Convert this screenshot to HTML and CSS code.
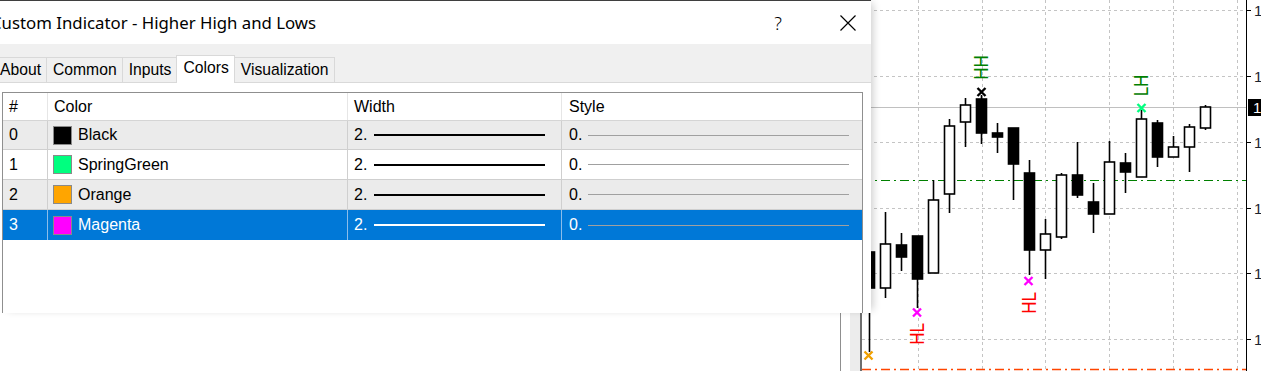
FILE: index.html
```html
<!DOCTYPE html>
<html lang="en">
<head>
    <meta charset="UTF-8">
    <title>Custom Indicator - Higher High and Lows</title>
    <link rel="stylesheet" href="styles.css">
</head>
<body>
    <div class="desk">
        <div class="chart">
            <svg width="399" height="371" viewBox="862 0 399 371">
                <!-- grid -->
                <g class="grid">
                    <line x1="862" y1="10.5" x2="1246" y2="10.5"/>
                    <line x1="862" y1="76.5" x2="1246" y2="76.5"/>
                    <line x1="862" y1="142.5" x2="1246" y2="142.5"/>
                    <line x1="862" y1="208.5" x2="1246" y2="208.5"/>
                    <line x1="862" y1="273.5" x2="1246" y2="273.5"/>
                    <line x1="862" y1="339.5" x2="1246" y2="339.5"/>
                    <line x1="918.5" y1="0" x2="918.5" y2="371"/>
                    <line x1="982.5" y1="0" x2="982.5" y2="371"/>
                    <line x1="1045.5" y1="0" x2="1045.5" y2="371"/>
                    <line x1="1109.5" y1="0" x2="1109.5" y2="371"/>
                    <line x1="1173.5" y1="0" x2="1173.5" y2="371"/>
                    <line x1="1237.5" y1="0" x2="1237.5" y2="371"/>
                </g>
                <line class="price-line" x1="862" y1="107.5" x2="1246" y2="107.5"/>
                <line class="level-green" x1="862" y1="180.5" x2="1246" y2="180.5"/>
                <line class="level-red" x1="862" y1="369.5" x2="1246" y2="369.5"/>

                <!-- candles -->
                <g class="candles">
                    <line x1="869.5" y1="240" x2="869.5" y2="352"/><rect class="bear" x="864.5" y="252" width="10" height="36"/>
                    <line x1="885.5" y1="212" x2="885.5" y2="298"/><rect class="bull" x="880.5" y="244" width="10" height="44"/>
                    <line x1="901.5" y1="233" x2="901.5" y2="271"/><rect class="bear" x="896.5" y="245" width="10" height="12"/>
                    <line x1="917.5" y1="236" x2="917.5" y2="308"/><rect class="bear" x="912.5" y="236" width="10" height="43"/>
                    <line x1="933.5" y1="180" x2="933.5" y2="273"/><rect class="bull" x="928.5" y="200" width="10" height="73"/>
                    <line x1="949.5" y1="119" x2="949.5" y2="213"/><rect class="bull" x="944.5" y="126" width="10" height="68"/>
                    <line x1="965.5" y1="98" x2="965.5" y2="147"/><rect class="bull" x="960.5" y="105" width="10" height="17"/>
                    <line x1="981.5" y1="95" x2="981.5" y2="144"/><rect class="bear" x="976.5" y="99" width="10" height="34"/>
                    <line x1="997.5" y1="123" x2="997.5" y2="153"/><rect class="bear" x="992.5" y="133" width="10" height="4"/>
                    <line x1="1013.5" y1="128" x2="1013.5" y2="200"/><rect class="bear" x="1008.5" y="128" width="10" height="36"/>
                    <line x1="1029.5" y1="160" x2="1029.5" y2="275"/><rect class="bear" x="1024.5" y="173" width="10" height="77"/>
                    <line x1="1045.5" y1="219" x2="1045.5" y2="279"/><rect class="bull" x="1040.5" y="234" width="10" height="16"/>
                    <line x1="1061.5" y1="173" x2="1061.5" y2="239"/><rect class="bull" x="1056.5" y="175" width="10" height="62"/>
                    <line x1="1077.5" y1="142" x2="1077.5" y2="198"/><rect class="bear" x="1072.5" y="175" width="10" height="20"/>
                    <line x1="1093.5" y1="183" x2="1093.5" y2="233"/><rect class="bear" x="1088.5" y="202" width="10" height="12"/>
                    <line x1="1109.5" y1="141" x2="1109.5" y2="214"/><rect class="bull" x="1104.5" y="162" width="10" height="52"/>
                    <line x1="1125.5" y1="153" x2="1125.5" y2="193"/><rect class="bear" x="1120.5" y="163" width="10" height="9"/>
                    <line x1="1141.5" y1="110" x2="1141.5" y2="177"/><rect class="bull" x="1136.5" y="119" width="10" height="58"/>
                    <line x1="1157.5" y1="120" x2="1157.5" y2="167"/><rect class="bear" x="1152.5" y="123" width="10" height="34"/>
                    <line x1="1173.5" y1="136" x2="1173.5" y2="157"/><rect class="bull" x="1168.5" y="147" width="10" height="10"/>
                    <line x1="1189.5" y1="124" x2="1189.5" y2="172"/><rect class="bull" x="1184.5" y="127" width="10" height="20"/>
                    <line x1="1205.5" y1="105" x2="1205.5" y2="130"/><rect class="bull" x="1200.5" y="107" width="10" height="21"/>
                </g>

                <!-- swing markers -->
                <path class="mark mark-black" d="M977.5 88 L985.5 96 M985.5 88 L977.5 96"/>
                <path class="mark mark-green" d="M1137.5 104 L1145.5 112 M1145.5 104 L1137.5 112"/>
                <path class="mark mark-magenta" d="M913 308.5 L921 316.5 M921 308.5 L913 316.5"/>
                <path class="mark mark-magenta" d="M1024.5 277 L1032.5 285 M1032.5 277 L1024.5 285"/>
                <path class="mark mark-orange" d="M864.5 351.5 L872.5 359.5 M872.5 351.5 L864.5 359.5"/>

                <text class="swing swing-high" transform="translate(988,67.5) rotate(-90) scale(1,1.15)">HH</text>
                <text class="swing swing-high" transform="translate(1148,85.5) rotate(-90) scale(1,1.15)">LH</text>
                <text class="swing swing-low" transform="translate(924,334) rotate(-90) scale(1,1.15)">HL</text>
                <text class="swing swing-low" transform="translate(1036,303) rotate(-90) scale(1,1.15)">HL</text>

                <!-- price axis -->
                <line class="axis" x1="1246.5" y1="0" x2="1246.5" y2="371"/>
                <g class="ticks">
                    <line x1="1246" y1="10.5" x2="1251" y2="10.5"/>
                    <line x1="1246" y1="76.5" x2="1251" y2="76.5"/>
                    <line x1="1246" y1="142.5" x2="1251" y2="142.5"/>
                    <line x1="1246" y1="208.5" x2="1251" y2="208.5"/>
                    <line x1="1246" y1="273.5" x2="1251" y2="273.5"/>
                    <line x1="1246" y1="339.5" x2="1251" y2="339.5"/>
                </g>
                <g class="axis-label">
                    <text x="1254" y="16">1</text>
                    <text x="1254" y="82">1</text>
                    <text x="1254" y="148">1</text>
                    <text x="1254" y="214">1</text>
                    <text x="1254" y="279">1</text>
                    <text x="1254" y="345">1</text>
                </g>
                <rect class="price-box" x="1248" y="99" width="13" height="17"/>
                <text class="price-text" x="1253" y="113">1</text>
            </svg>
        </div>

        <div class="back">
            <div class="back-main"></div>
            <div class="back-gap"></div>
            <div class="back-edge"></div>
        </div>

        <div class="dialog">
            <div class="titlebar">
                <span class="title">Custom Indicator - Higher High and Lows</span>
                <span class="help">?</span>
                <svg class="close" width="16" height="16" viewBox="0 0 16 16">
                    <path d="M0.5 0.5 L15.5 15.5 M15.5 0.5 L0.5 15.5"/>
                </svg>
            </div>

            <div class="tabs">
                <div class="tab">About</div>
                <div class="tab">Common</div>
                <div class="tab">Inputs</div>
                <div class="tab active">Colors</div>
                <div class="tab">Visualization</div>
            </div>

            <div class="content">
                <div class="buffers">
                    <div class="row head">
                        <div class="cell">#</div>
                        <div class="cell">Color</div>
                        <div class="cell">Width</div>
                        <div class="cell cell-style">Style</div>
                    </div>
                    <div class="row alt">
                        <div class="cell">0</div>
                        <div class="cell cell-color"><span class="swatch" style="background:#000000"></span>Black</div>
                        <div class="cell">2.<span class="wline"></span></div>
                        <div class="cell cell-style">0.<span class="sline"></span></div>
                    </div>
                    <div class="row">
                        <div class="cell">1</div>
                        <div class="cell cell-color"><span class="swatch" style="background:#00ff7f"></span>SpringGreen</div>
                        <div class="cell">2.<span class="wline"></span></div>
                        <div class="cell cell-style">0.<span class="sline"></span></div>
                    </div>
                    <div class="row alt">
                        <div class="cell">2</div>
                        <div class="cell cell-color"><span class="swatch" style="background:#ffa500"></span>Orange</div>
                        <div class="cell">2.<span class="wline"></span></div>
                        <div class="cell cell-style">0.<span class="sline"></span></div>
                    </div>
                    <div class="row selected">
                        <div class="cell">3</div>
                        <div class="cell cell-color"><span class="swatch" style="background:#ff00ff"></span>Magenta</div>
                        <div class="cell">2.<span class="wline"></span></div>
                        <div class="cell cell-style">0.<span class="sline"></span></div>
                    </div>
                </div>
            </div>
        </div>
    </div>
</body>
</html>
```

FILE: styles.css
```css
body {
    margin: 0;
    background: #fff;
    font-family: "Liberation Sans", Arial, sans-serif;
    color: #000;
}

.desk {
    position: relative;
    width: 1261px;
    height: 371px;
    overflow: hidden;
}

/* chart window behind the dialog */
.chart {
    position: absolute;
    left: 860px;
    top: 0;
    width: 399px;
    height: 371px;
    border-left: 2px solid #6e6e6e;
    background: #fff;
}

.chart svg {
    display: block;
}

.grid line {
    stroke: #c4c4c4;
    stroke-width: 1;
    stroke-dasharray: 3 3;
}

.price-line {
    stroke: #c0c0c0;
    stroke-width: 1;
}

.level-green {
    stroke: #008000;
    stroke-width: 1.2;
    stroke-dasharray: 9 4 2 4;
}

.level-red {
    stroke: #ff4500;
    stroke-width: 1.4;
    stroke-dasharray: 9 4 2 4;
}

.candles line {
    stroke: #000;
    stroke-width: 1.6;
}

.candles .bull {
    fill: #fff;
    stroke: #000;
    stroke-width: 1.6;
}

.candles .bear {
    fill: #000;
    stroke: #000;
    stroke-width: 1.6;
}

.mark {
    fill: none;
    stroke-width: 2.4;
}

.mark-black { stroke: #000; }
.mark-green { stroke: #00ff7f; }
.mark-magenta { stroke: #ff00ff; }
.mark-orange { stroke: #f0a000; }

.swing {
    font-family: "Liberation Sans", Arial, sans-serif;
    font-size: 17px;
    text-anchor: middle;
}

.swing-high { fill: #008000; }
.swing-low { fill: #ff0000; }

.axis,
.ticks line {
    stroke: #000;
    stroke-width: 1;
}

.axis-label text {
    font-family: "Liberation Sans", Arial, sans-serif;
    font-size: 15px;
    fill: #1c2430;
}

.price-box {
    fill: #000;
}

.price-text {
    font-family: "Liberation Sans", Arial, sans-serif;
    font-size: 15px;
    fill: #fff;
}

/* strip of another window below the dialog */
.back {
    position: absolute;
    left: 0;
    top: 313px;
    width: 860px;
    height: 58px;
    display: flex;
}

.back-main {
    width: 840px;
    border-right: 1px solid #8f8f8f;
    background: #fff;
}

.back-gap {
    width: 9px;
    background: #fff;
}

.back-edge {
    flex: 1;
    background: #ececec;
}

/* dialog */
.dialog {
    position: absolute;
    left: 0;
    top: 0;
    width: 871px;
    height: 312px;
    border-top: 1px solid #3f3f3f;
    background: #fff;
    overflow: hidden;
    box-shadow: 5px 0 8px -3px rgba(0, 0, 0, 0.2);
    display: flex;
    flex-direction: column;
}

.titlebar {
    height: 43px;
    flex-shrink: 0;
    display: flex;
    align-items: center;
}

.title {
    flex: 1;
    margin-left: -9px;
    font-family: "Noto Sans", "Open Sans", sans-serif;
    font-size: 16.8px;
    white-space: nowrap;
}

.help {
    margin-right: 58px;
    font-family: "Noto Sans", sans-serif;
    font-size: 18px;
    font-weight: 300;
}

.close {
    margin-right: 15px;
}

.close path {
    stroke: #000;
    stroke-width: 1.2;
    fill: none;
}

.tabs {
    height: 38px;
    flex-shrink: 0;
    background: #f0f0f0;
    border-bottom: 1px solid #d9d9d9;
    display: flex;
    align-items: flex-end;
}

.tab {
    height: 24px;
    line-height: 24px;
    padding: 0 5px 0 6px;
    margin-left: -1px;
    border: 1px solid #d9d9d9;
    border-bottom: 0;
    background: #f0f0f0;
    font-size: 15.7px;
}

.tab:first-child {
    margin-left: -7px;
}

.tab.active {
    position: relative;
    height: 27px;
    margin-bottom: -1px;
    background: #fff;
}

.content {
    flex: 1;
    padding: 9px 0 0 2px;
}

.buffers {
    width: 859px;
    height: 300px;
    border: 1px solid #8f8f8f;
    font-size: 16px;
}

.row {
    display: grid;
    grid-template-columns: 45px 300px 214px 300px;
    height: 30px;
    box-sizing: border-box;
    border-bottom: 1px solid #cfcfcf;
}

.row.head {
    height: 28px;
    border-bottom-color: #d5d5d5;
}

.head + .row {
    height: 29px;
}

.row.alt {
    background: #ebebeb;
}

.row.selected {
    background: #0078d7;
    color: #fff;
    border-bottom: 0;
}

.cell {
    display: flex;
    align-items: center;
    padding-left: 6px;
    border-right: 1px solid #cfcfcf;
    white-space: nowrap;
}

.cell:last-child {
    border-right: 0;
}

.head .cell {
    border-right-color: #e6e6e6;
}

.selected .cell {
    border-right-color: #8cbdea;
}

.cell-color {
    padding-left: 5px;
}

.cell-style {
    padding-left: 7px;
}

.swatch {
    width: 17px;
    height: 17px;
    border: 1px solid #8a8a8a;
    margin-right: 6px;
}

.wline {
    width: 171px;
    height: 2px;
    margin-left: 7px;
    background: #000;
}

.selected .wline {
    background: #fff;
}

.sline {
    width: 261px;
    height: 1px;
    margin-left: 6px;
    background: #a0a0a0;
}
```
